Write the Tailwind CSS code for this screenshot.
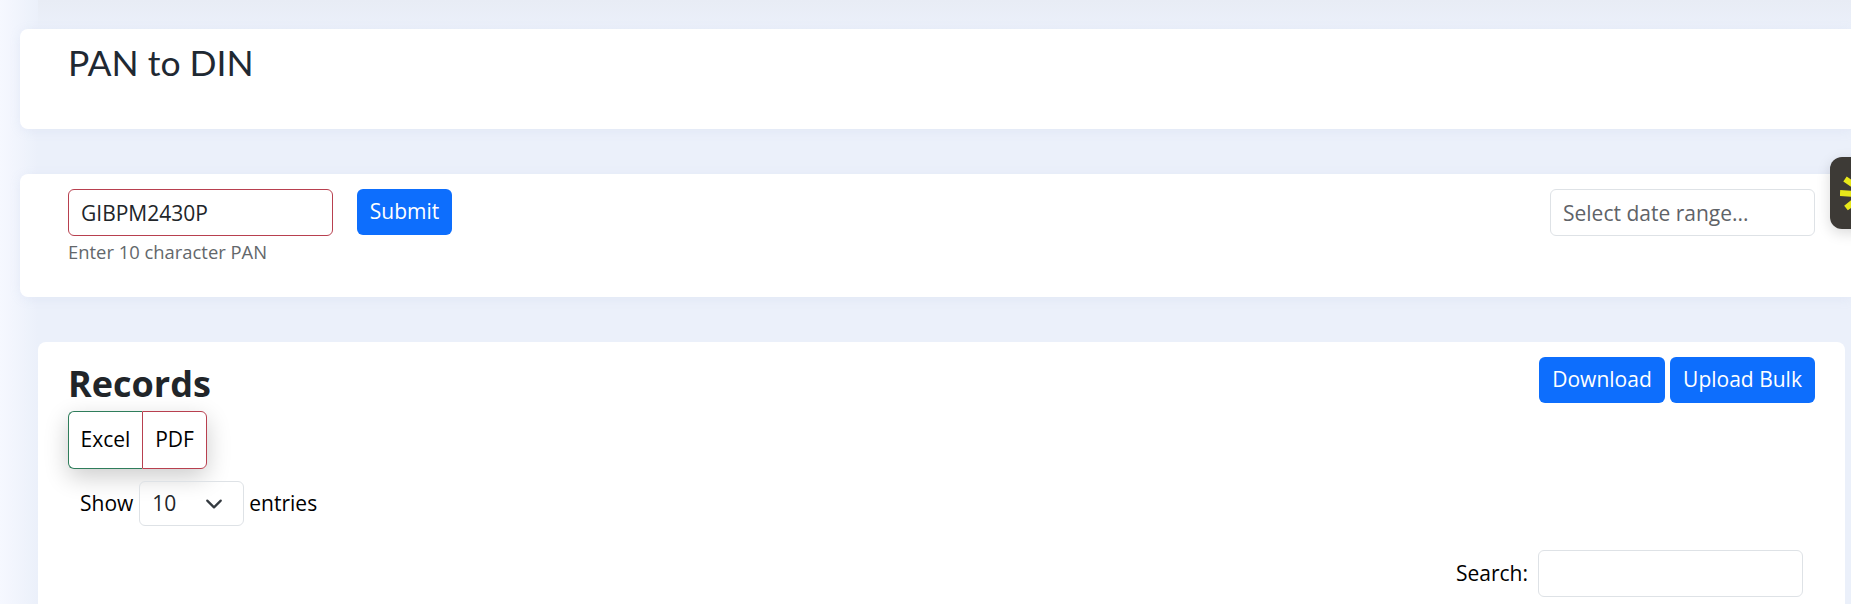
<!DOCTYPE html>
<html lang="en">
<head>
  <meta charset="UTF-8" />
  <title>PAN to DIN</title>
  <script src="https://cdn.jsdelivr.net/npm/@tailwindcss/browser@4"></script>
</head>
<body class="h-[604px] overflow-hidden bg-[#ebf0fa] font-['Open_Sans',sans-serif] text-[21px] text-[#212529]">
  <div class="relative h-[604px] overflow-hidden">
    <!-- soft glow on the page edges -->
    <div class="pointer-events-none absolute inset-x-0 top-0 h-[29px] bg-gradient-to-b from-[#e8ecf5] to-[#ebf0fa]"></div>
    <div class="pointer-events-none absolute inset-y-0 left-0 w-[38px] bg-gradient-to-r from-[#f6f8ff] to-[#ebf0fa]"></div>

    <div class="relative pl-[20px] pt-[29px]">
      <!-- Title -->
      <div class="h-[100px] rounded-l-lg bg-white pl-[48px] pt-[10px] shadow-[0_2px_12px_rgba(160,175,210,0.12)]">
        <h1 class="font-['Lato',sans-serif] text-[35.5px] font-normal leading-[48px] text-[#1f2933]">PAN to DIN</h1>
      </div>

      <!-- PAN form -->
      <div class="mt-[45px] flex h-[123px] justify-between rounded-l-lg bg-white pl-[48px] pr-[36px] pt-[15px] shadow-[0_2px_12px_rgba(160,175,210,0.12)]">
        <div class="flex items-start gap-[24px]">
          <div>
            <input type="text" value="GIBPM2430P" class="block h-[47px] w-[265px] rounded-md border border-[#b8404f] px-[12px] text-[#212529] outline-none" />
            <p class="mt-[4px] text-[18.4px] leading-[24px] text-[#63676b]">Enter 10 character PAN</p>
          </div>
          <button class="h-[46px] w-[95px] rounded-md bg-[#0d6efd] text-white">Submit</button>
        </div>
        <input type="text" placeholder="Select date range..." class="h-[47px] w-[265px] rounded-md border border-[#dee2e6] px-[12px] outline-none placeholder:text-[#5f6368]" />
      </div>

      <!-- Records -->
      <div class="ml-[18px] mr-[6px] mt-[45px] h-[300px] rounded-t-lg bg-white pl-[30px] pr-[30px] pt-[15px]">
        <div class="flex items-start justify-between">
          <h3 class="pt-[6px] text-[36px] font-bold leading-[42px] text-[#212529]">Records</h3>
          <div class="flex gap-[5px]">
            <button class="h-[46px] w-[126px] rounded-md bg-[#0d6efd] text-white">Download</button>
            <button class="h-[46px] w-[145px] rounded-md bg-[#0d6efd] text-white">Upload Bulk</button>
          </div>
        </div>

        <div class="mt-[6px] flex h-[58px] w-fit rounded-md shadow-[0_8px_24px_rgba(0,0,0,0.2)]">
          <button class="w-[74px] rounded-l-md border border-r-0 border-[#2f7d5b] text-black">Excel</button>
          <button class="w-[65px] rounded-r-md border border-[#b8404f] text-black">PDF</button>
        </div>

        <div class="ml-[12px] mt-[12px] flex items-center gap-[5px] text-black">
          <span>Show</span>
          <div class="ml-px flex h-[45px] w-[105px] items-center justify-between rounded-md border border-[#dee2e6] pl-[12px] pr-[20px] text-[#212529]">
            <span>10</span>
            <svg width="18" height="18" viewBox="0 0 16 16" fill="none" stroke="#343a40" stroke-width="2" stroke-linecap="round" stroke-linejoin="round"><path d="M2 5l6 6 6-6" /></svg>
          </div>
          <span>entries</span>
        </div>

        <div class="mr-[12px] mt-[24px] flex items-center justify-end gap-[10px] text-black">
          <label>Search:</label>
          <input type="text" class="h-[47px] w-[265px] rounded-md border border-[#dee2e6] outline-none" />
        </div>
      </div>
    </div>

    <!-- Floating widget tab -->
    <div class="absolute left-[1830px] top-[157px] flex h-[72px] w-[40px] items-center rounded-l-xl bg-[#3d3a36] pl-[10px] shadow-[0_4px_14px_rgba(0,0,0,0.15)]">
      <svg width="20" height="36" viewBox="0 0 20 36" fill="none" stroke="#e8e81a" stroke-width="6"><path d="M5 4l10 7M0 18l14 1M6 33l9-7" /></svg>
    </div>
  </div>
</body>
</html>
